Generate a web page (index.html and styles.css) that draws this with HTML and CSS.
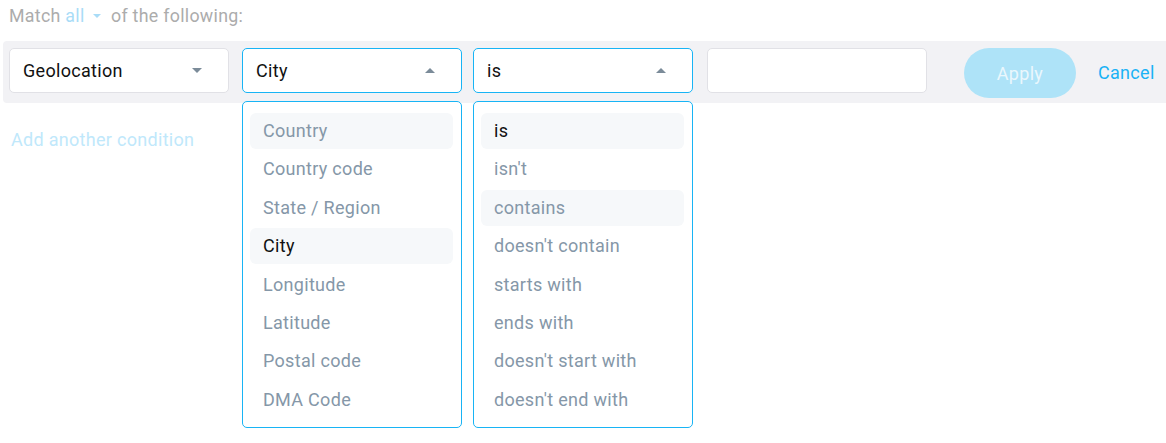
FILE: index.html
```html
<!DOCTYPE html>
<html>
<head>
<meta charset="utf-8">
<link rel="stylesheet" href="styles.css">
</head>
<body>
<div class="page">
  <div class="match">Match <span class="all">all <span class="mini-caret"></span></span> of the following:</div>
  <div class="bar">
    <div class="select">
      <span>Geolocation</span>
      <span class="caret down"></span>
    </div>
    <div class="select open s-field">
      <span>City</span>
      <span class="caret up"></span>
      <ul class="menu">
        <li class="hl">Country</li>
        <li>Country code</li>
        <li>State / Region</li>
        <li class="hl sel">City</li>
        <li>Longitude</li>
        <li>Latitude</li>
        <li>Postal code</li>
        <li>DMA Code</li>
      </ul>
    </div>
    <div class="select open s-op">
      <span>is</span>
      <span class="caret up"></span>
      <ul class="menu">
        <li class="hl sel">is</li>
        <li>isn't</li>
        <li class="hl">contains</li>
        <li>doesn't contain</li>
        <li>starts with</li>
        <li>ends with</li>
        <li>doesn't start with</li>
        <li>doesn't end with</li>
      </ul>
    </div>
    <div class="input"></div>
    <button class="apply">Apply</button>
    <span class="cancel">Cancel</span>
  </div>
  <div class="add">Add another condition</div>
</div>
</body>
</html>
```
FILE: styles.css
```css
html, body {
  margin: 0;
  padding: 0;
  background: #ffffff;
  font-family: Roboto, "Liberation Sans", sans-serif;
  letter-spacing: 0.3px;
}
.page {
  width: 1166px;
  height: 443px;
  overflow: hidden;
}
.match {
  padding: 5px 0 0 9px;
  height: 22px;
  line-height: 22px;
  font-size: 17.8px;
  color: #acacac;
}
.all {
  color: #a9dcf7;
}
.mini-caret {
  display: inline-block;
  width: 0;
  height: 0;
  border-left: 4px solid transparent;
  border-right: 4px solid transparent;
  border-top: 4px solid #a9dcf7;
  vertical-align: middle;
  margin: 0 5px 0 4px;
  position: relative;
  top: -1px;
}
.bar {
  margin: 14px 0 0 3px;
  height: 62px;
  background: #f2f2f5;
  border-radius: 4px 0 0 4px;
  display: flex;
  align-items: flex-start;
  padding: 7px 0 0 6px;
  box-sizing: border-box;
}
.select {
  position: relative;
  width: 220px;
  height: 45px;
  box-sizing: border-box;
  background: #ffffff;
  border: 1px solid #e1e1e6;
  border-radius: 5px;
  display: flex;
  align-items: center;
  justify-content: space-between;
  padding: 0 26px 0 13px;
  font-size: 18px;
  color: #111;
}
.select.open {
  border-color: #18b4f5;
}
.s-field { margin-left: 13px; }
.s-op { margin-left: 11px; }
.caret {
  width: 0;
  height: 0;
  border-left: 5px solid transparent;
  border-right: 5px solid transparent;
}
.caret.down { border-top: 5px solid #7b8b99; }
.caret.up { border-bottom: 5px solid #7b8b99; }
.menu {
  position: absolute;
  left: -1px;
  top: 52px;
  width: 220px;
  height: 327px;
  box-sizing: border-box;
  margin: 0;
  list-style: none;
  background: #ffffff;
  border: 1px solid #18b4f5;
  border-radius: 5px;
  padding: 11px 8px 0 7px;
  display: flex;
  flex-direction: column;
  gap: 2.4px;
  z-index: 2;
}
.menu li {
  height: 36px;
  line-height: 36px;
  padding-left: 13px;
  border-radius: 6px;
  font-size: 18px;
  color: #8597a8;
}
.menu li.hl { background: #f6f8fa; }
.menu li.sel { color: #111; }
.input {
  margin-left: 14px;
  width: 220px;
  height: 45px;
  box-sizing: border-box;
  background: #fff;
  border: 1px solid #e1e1e6;
  border-radius: 5px;
}
.apply {
  margin-left: 37px;
  width: 112px;
  height: 50px;
  border: none;
  border-radius: 25px;
  background: #aee3f8;
  color: #eaf7fd;
  font-family: Roboto, "Liberation Sans", sans-serif;
  letter-spacing: 0.3px;
  font-size: 18px;
  padding: 0;
}
.cancel {
  margin-left: 22px;
  height: 50px;
  line-height: 50px;
  font-size: 18px;
  color: #1ab2f5;
}
.add {
  margin: 25px 0 0 11px;
  font-size: 18px;
  line-height: 24px;
  color: #c0e8fb;
}
```
